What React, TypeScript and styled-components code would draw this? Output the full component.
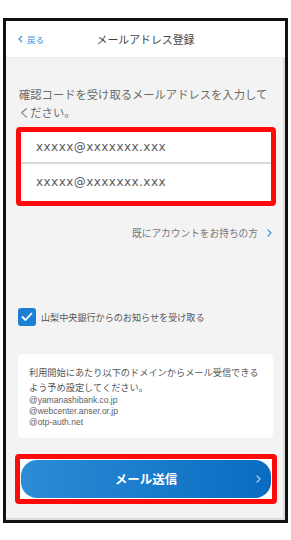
import React from "react";
import styled, { createGlobalStyle } from "styled-components";

const Global = createGlobalStyle`
  html, body { margin: 0; padding: 0; background: #fff; }
  body { font-family: "Noto Sans CJK JP", "Noto Sans", sans-serif; }
  * { box-sizing: border-box; }
`;

const Page = styled.div`
  padding: 18px 0 0 3px;
  width: 291px;
  height: 540px;
`;

const Phone = styled.div`
  width: 285px;
  height: 505px;
  border: 3px solid #111;
  background: #f3f3f3;
  display: flex;
  flex-direction: column;
  box-shadow: inset -2px -2px 0 #dcdcdc;
`;

const Header = styled.div`
  height: 37px;
  background: #fff;
  display: grid;
  grid-template-columns: 1fr auto 1fr;
  align-items: center;
  padding: 0 12px;
  border-bottom: 1px solid #ececec;
`;

const Back = styled.span`
  color: #3d8fd9;
  font-size: 8.5px;
  display: flex;
  align-items: center;
  gap: 4px;
`;

const Title = styled.span`
  color: #444;
  font-size: 10.9px;
`;

const Content = styled.div`
  flex: 1;
  display: flex;
  flex-direction: column;
  padding: 27px 12px 0 13px;
`;

const Description = styled.p`
  margin: 0 0 6px;
  color: #6a6a6a;
  font-size: 11.3px;
  line-height: 18px;
`;

const Highlight = styled.div<{ $pad?: number }>`
  border: 5px solid #ff0a0a;
  border-radius: 4px;
  background: #fff;
  margin: 0 -3px;
  padding: ${(p) => p.$pad ?? 0}px;
`;

const InputRow = styled.div<{ $h: number }>`
  height: ${(p) => p.$h}px;
  display: flex;
  align-items: center;
  padding-left: 15px;
  color: #5a5a5a;
  font-size: 12px;
  letter-spacing: 0.45px;
  font-family: "DejaVu Sans", sans-serif;
`;

const Separator = styled.div`
  height: 1.5px;
  background: #dadada;
`;

const LinkRow = styled.div`
  display: flex;
  justify-content: flex-end;
  align-items: center;
  gap: 9px;
  margin-top: 20px;
  margin-right: 1px;
  color: #777;
  font-size: 9.7px;
`;

const CheckRow = styled.div`
  display: flex;
  align-items: center;
  gap: 5px;
  margin-top: 68px;
  margin-left: -1px;
  color: #555;
  font-size: 9.1px;
`;

const Box = styled.div`
  width: 18px;
  height: 18px;
  border-radius: 3px;
  background: #1d7fd4;
  display: flex;
  align-items: center;
  justify-content: center;
`;

const InfoCard = styled.div`
  margin-top: 28px;
  margin-left: -1px;
  background: #fff;
  border-radius: 4px;
  padding: 11px 10px 10px 11px;
  color: #555;
`;

const InfoText = styled.p`
  margin: 0;
  font-size: 9.2px;
  line-height: 15px;
`;

const Domains = styled.div`
  font-family: "Liberation Sans", Arial, sans-serif;
  font-size: 8.5px;
  line-height: 11px;
  color: #5e5e5e;
`;

const ButtonWrap = styled(Highlight)`
  margin-top: 16px;
  margin-left: -4px;
  margin-right: -4px;
`;

const SendButton = styled.div`
  height: 38px;
  border-radius: 16px;
  background: linear-gradient(90deg, #2c8cd6 0%, #1a7ccc 50%, #0a6cc0 100%);
  color: #fff;
  font-weight: bold;
  font-size: 12.5px;
  display: grid;
  grid-template-columns: 1fr auto 1fr;
  align-items: center;
  padding: 0 10px;
`;

const ChevronCell = styled.span`
  justify-self: end;
  display: flex;
`;

const Chevron = ({ color, size = 6 }: { color: string; size?: number }) => (
  <svg width={size} height={size * 1.6} viewBox="0 0 6 10">
    <path d="M1 1 L5 5 L1 9" fill="none" stroke={color} strokeWidth="1.4" strokeLinecap="round" strokeLinejoin="round" />
  </svg>
);

export default function App() {
  return (
    <Page>
      <Global />
      <Phone>
        <Header>
          <Back>
            <svg width="5" height="8" viewBox="0 0 5 8">
              <path d="M4 1 L1 4 L4 7" fill="none" stroke="#3d8fd9" strokeWidth="1.2" />
            </svg>
            戻る
          </Back>
          <Title>メールアドレス登録</Title>
          <span />
        </Header>
        <Content>
          <Description>確認コードを受け取るメールアドレスを入力してください。</Description>
          <Highlight>
            <InputRow $h={30}>xxxxx@xxxxxxx.xxx</InputRow>
            <Separator />
            <InputRow $h={37}>xxxxx@xxxxxxx.xxx</InputRow>
          </Highlight>
          <LinkRow>
            既にアカウントをお持ちの方
            <Chevron color="#3d8fd9" size={5} />
          </LinkRow>
          <CheckRow>
            <Box>
              <svg width="12" height="10" viewBox="0 0 12 10">
                <path d="M1.5 5 L4.5 8 L10.5 1.5" fill="none" stroke="#fff" strokeWidth="1.8" strokeLinecap="round" strokeLinejoin="round" />
              </svg>
            </Box>
            山梨中央銀行からのお知らせを受け取る
          </CheckRow>
          <InfoCard>
            <InfoText>利用開始にあたり以下のドメインからメール受信できるよう予め設定してください。</InfoText>
            <Domains>
              @yamanashibank.co.jp
              <br />
              @webcenter.anser.or.jp
              <br />
              @otp-auth.net
            </Domains>
          </InfoCard>
          <ButtonWrap $pad={1}>
            <SendButton>
              <span />
              <span>メール送信</span>
              <ChevronCell>
                <Chevron color="#b9d8f3" size={5} />
              </ChevronCell>
            </SendButton>
          </ButtonWrap>
        </Content>
      </Phone>
    </Page>
  );
}
